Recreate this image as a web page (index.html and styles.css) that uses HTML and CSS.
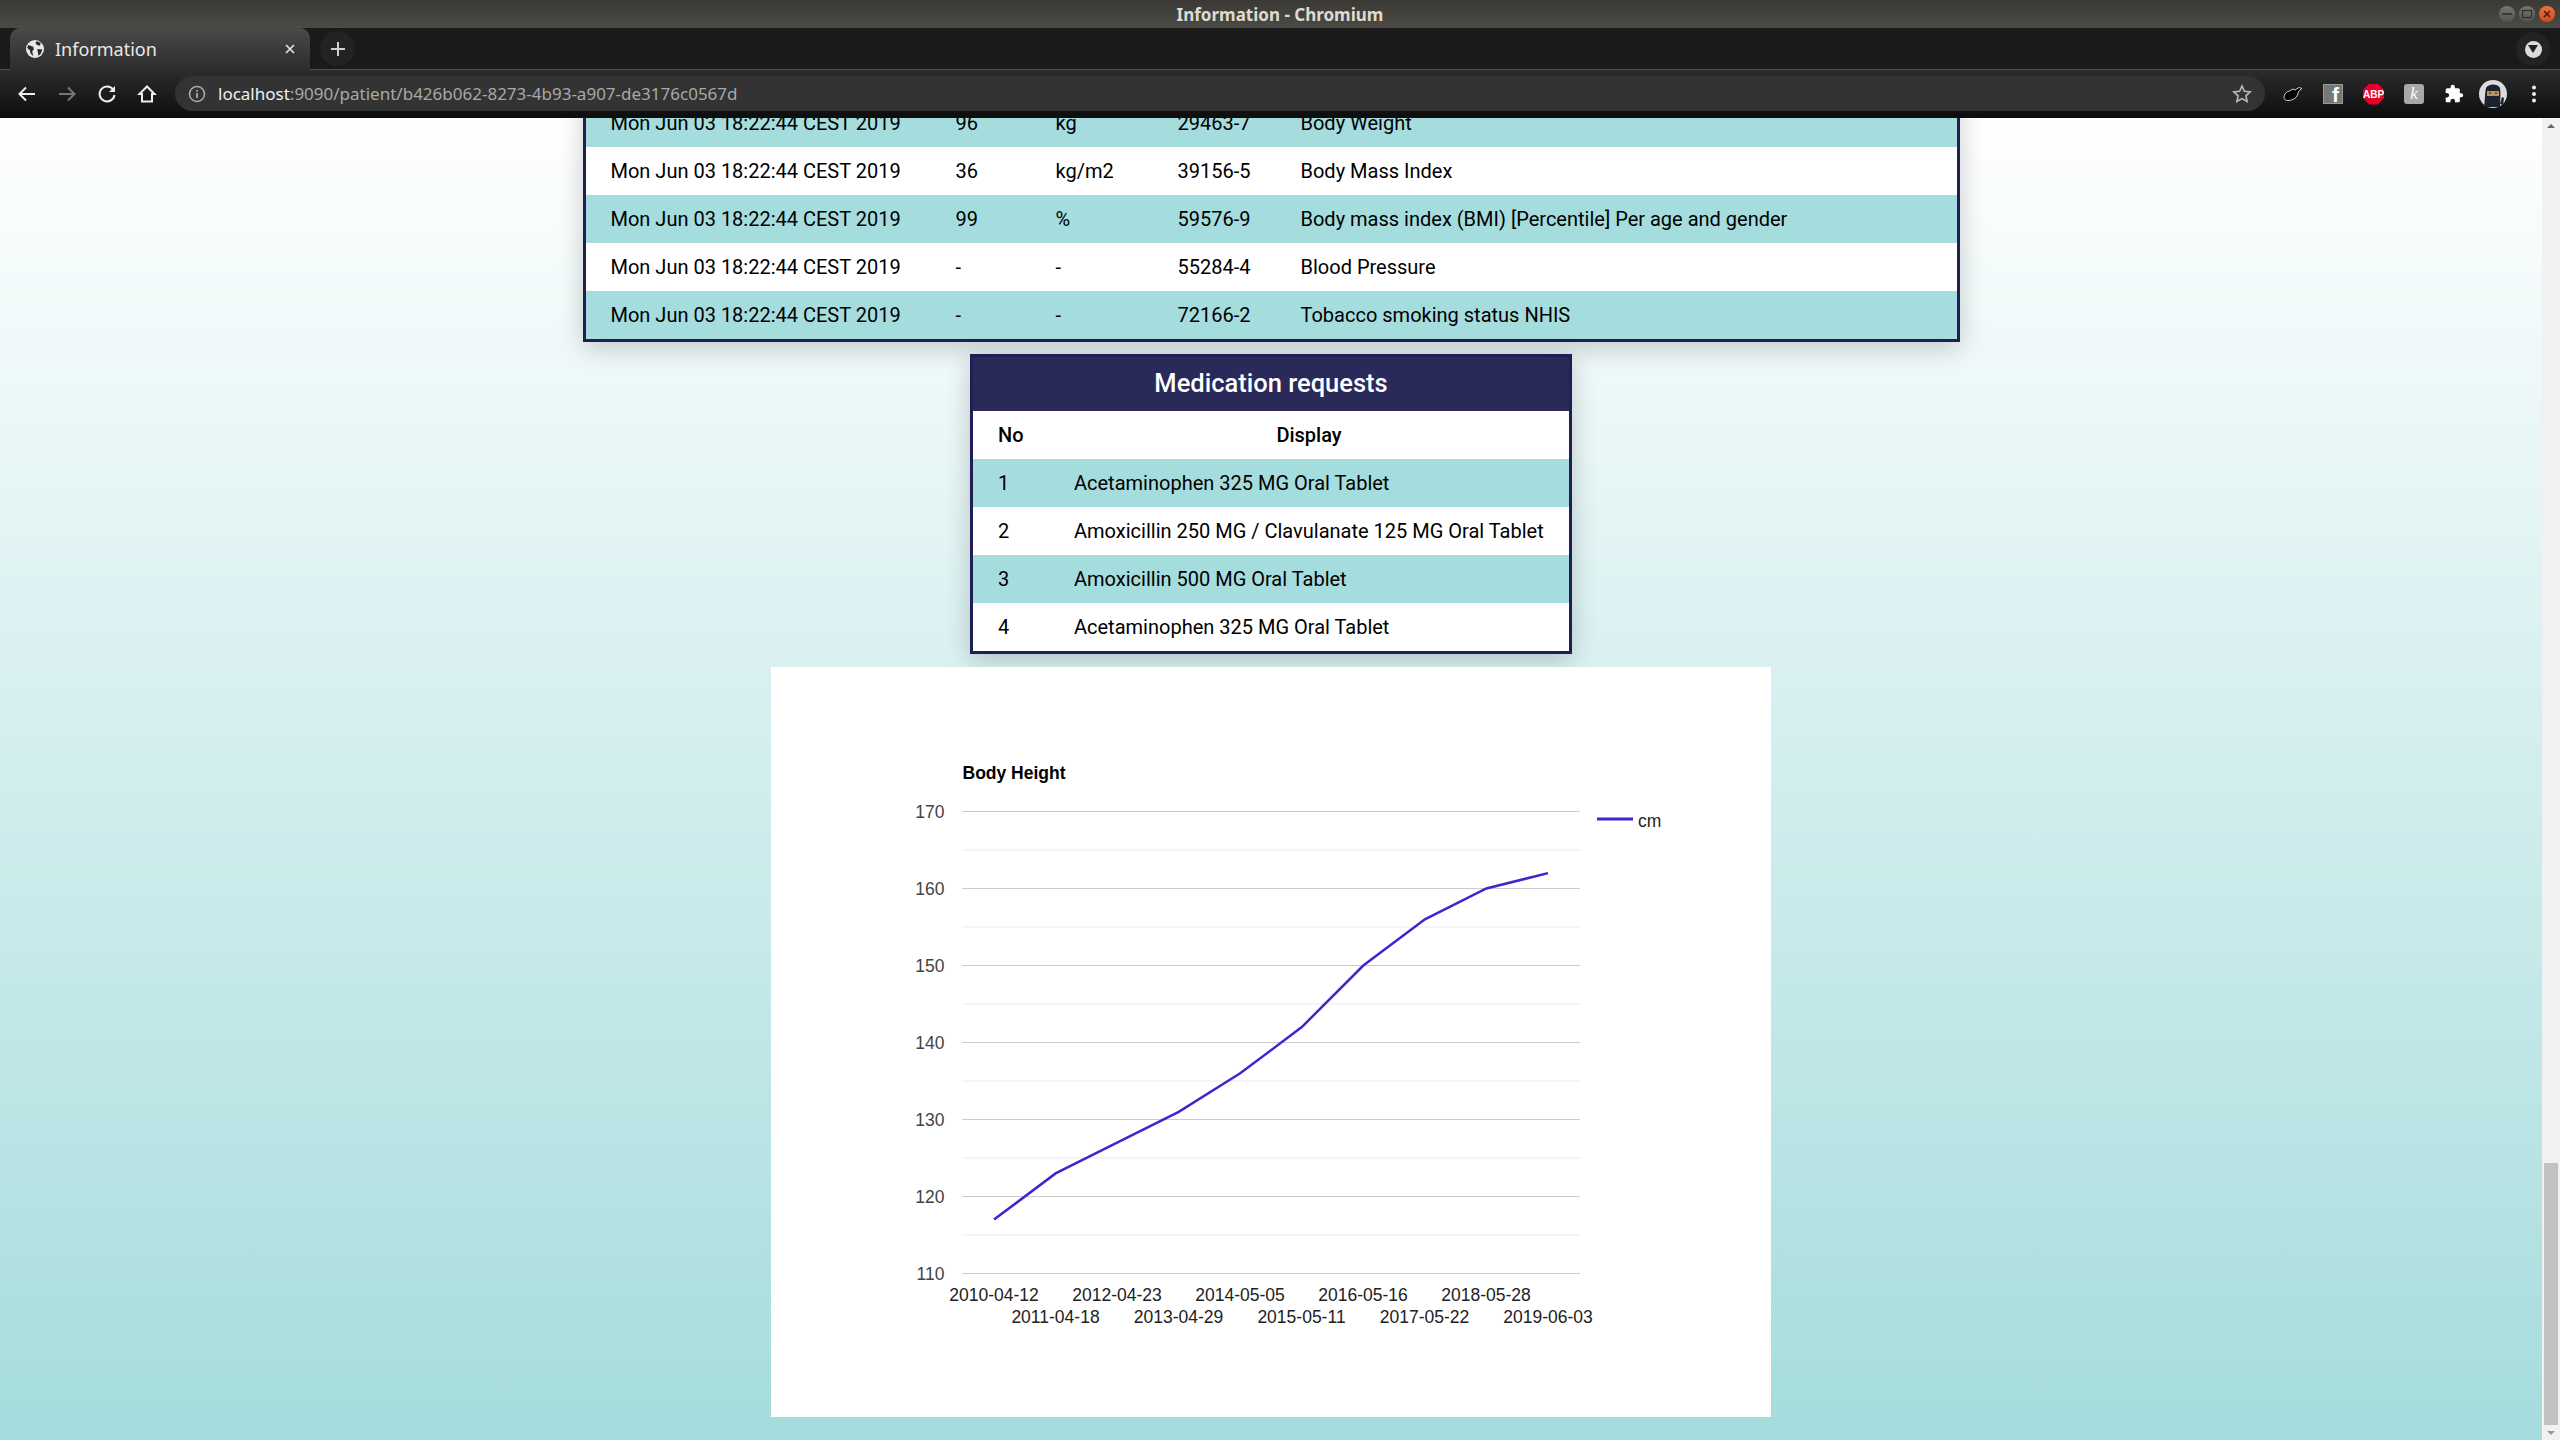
FILE: index.html
```html
<!DOCTYPE html>
<html>
<head>
<meta charset="utf-8"/>
<title>Information - Chromium</title>
<link rel="stylesheet" href="styles.css">
</head>
<body>

<!-- window title -->
<div class="titlebar">
  <span class="title-text">Information - Chromium</span>
  <div class="win-buttons">
    <span class="win-btn"><svg width="16" height="16"><path d="M3 8h10" stroke="#2e2d2a" stroke-width="1.5"/></svg></span>
    <span class="win-btn"><svg width="16" height="16"><rect x="3.5" y="4.5" width="9" height="7" fill="none" stroke="#2e2d2a" stroke-width="1.2"/></svg></span>
    <span class="win-btn win-close"><svg width="16" height="16"><path d="M5 5l6 6M11 5l-6 6" stroke="#3a2015" stroke-width="1.5"/></svg></span>
  </div>
</div>

<!-- tabs -->
<div class="tabstrip">
  <div class="tab">
    <svg class="favicon" width="18" height="18" viewBox="0 0 16 16">
      <circle cx="8" cy="8" r="8" fill="#e8e8e8"/>
      <path d="M2 4.5L6.5 6 7 8.5 5.5 10 6.5 14.5 4 12 3.5 9 1 7zM9 1l4 1.5-.5 2.5L10 4.5 8.5 3zM10 8l4.5 .5L13 12.5 11 14 10.5 10.5z" fill="#2a2a2a"/>
    </svg>
    <span class="tab-title">Information</span>
    <svg class="tab-close" width="12" height="12"><path d="M2 2l8 8M10 2l-8 8" stroke="#e8e8e8" stroke-width="1.6"/></svg>
  </div>
  <div class="new-tab"><svg width="16" height="16"><path d="M8 1v14M1 8h14" stroke="#d0d0d0" stroke-width="2"/></svg></div>
  <div class="strip-fill"></div>
  <div class="tab-search"><span class="tab-search-dot"><svg width="12" height="10"><path d="M1 1h10L6 9z" fill="#222"/></svg></span></div>
</div>

<!-- toolbar -->
<div class="toolbar">
  <svg class="nav-icon" width="20" height="20" viewBox="0 0 20 20"><path d="M18 10H3M9 3.500L2.500 10 9 16.500" fill="none" stroke="#eee" stroke-width="2"/></svg>
  <svg class="nav-icon" width="20" height="20" viewBox="0 0 20 20"><path d="M2 10h15M11 3.500l6.500 6.500-6.500 6.500" fill="none" stroke="#777" stroke-width="2"/></svg>
  <svg class="nav-icon" width="20" height="20" viewBox="0 0 20 20"><path d="M16.500 6A7.500 7.500 0 1 0 17.500 11" fill="none" stroke="#eee" stroke-width="2"/><path d="M18 2v6h-6z" fill="#eee"/></svg>
  <svg class="nav-icon" width="20" height="20" viewBox="0 0 20 20"><path d="M10 2.500L2.500 10H5v7.500h10V10h2.500z" fill="none" stroke="#eee" stroke-width="2"/></svg>
  <div class="omnibox">
    <svg width="18" height="18" viewBox="0 0 18 18"><circle cx="9" cy="9" r="7.500" fill="none" stroke="#aaa" stroke-width="1.600"/><path d="M9 8v5M9 5v1.800" stroke="#aaa" stroke-width="1.800"/></svg>
    <span class="url"><span class="url-host">localhost</span>:9090/patient/b426b062-8273-4b93-a907-de3176c0567d</span>
    <svg class="star" width="20" height="20" viewBox="0 0 20 20"><path d="M10 2l2.400 5.300 5.800 .6-4.300 3.900 1.200 5.700L10 14.600 4.900 17.500l1.200-5.700L1.800 7.900l5.800-.6z" fill="none" stroke="#bbb" stroke-width="1.600"/></svg>
  </div>
  <div class="ext-icons">
    <svg width="20" height="20" viewBox="0 0 20 20"><path d="M1 13.500C1 10 3.500 7.500 6.500 7L10 5 12 6 16 3.500 19 4.500 15.500 7.500 14.500 11C13 14.500 9.500 16.500 5 16.500 2.500 16.500 1 15.500 1 13.500z" fill="#000" stroke="#ccc" stroke-width="1"/></svg>
    <span class="ext-f">f</span>
    <span class="ext-abp">ABP</span>
    <span class="ext-k">k</span>
    <svg width="20" height="20" viewBox="0 0 24 24"><path d="M20.500 11H19V7c0-1.100-.9-2-2-2h-4V3.500C13 2.120 11.880 1 10.500 1S8 2.120 8 3.500V5H4c-1.100 0-1.990.9-1.990 2v3.800H3.500c1.490 0 2.700 1.210 2.700 2.700s-1.210 2.700-2.700 2.700H2V20c0 1.100.9 2 2 2h3.800v-1.500c0-1.490 1.210-2.700 2.700-2.700 1.490 0 2.700 1.210 2.700 2.700V22H17c1.100 0 2-.9 2-2v-4h1.500c1.380 0 2.500-1.120 2.500-2.500S21.880 11 20.500 11z" fill="#fff"/></svg>
    <svg class="avatar" width="28" height="28" viewBox="0 0 28 28">
      <circle cx="14" cy="14" r="14" fill="#dcdcdc"/>
      <path d="M5 27C6 20 6 12 7 8 9 4 18 3 21 8 22 13 21 20 21 27z" fill="#1d2230"/>
      <rect x="8" y="11" width="12" height="5" fill="#b9925f"/>
      <path d="M10 13h2M16 13h2" stroke="#222" stroke-width="1"/>
      <path d="M21 24l2-7 2 1-1 7z" fill="#1d2230"/>
    </svg>
    <svg width="6" height="20"><circle cx="3" cy="3.500" r="2" fill="#eee"/><circle cx="3" cy="10" r="2" fill="#eee"/><circle cx="3" cy="16.500" r="2" fill="#eee"/></svg>
  </div>
</div>

<div class="viewport">
  <div class="page">

    <table class="data-table obs-table">
      <colgroup><col class="c-date"><col class="c-value"><col class="c-unit"><col class="c-code"><col></colgroup>
      <tr><td>Mon Jun 03 18:22:44 CEST 2019</td><td>96</td><td>kg</td><td>29463-7</td><td>Body Weight</td></tr>
      <tr><td>Mon Jun 03 18:22:44 CEST 2019</td><td>36</td><td>kg/m2</td><td>39156-5</td><td>Body Mass Index</td></tr>
      <tr><td>Mon Jun 03 18:22:44 CEST 2019</td><td>99</td><td>%</td><td>59576-9</td><td>Body mass index (BMI) [Percentile] Per age and gender</td></tr>
      <tr><td>Mon Jun 03 18:22:44 CEST 2019</td><td>-</td><td>-</td><td>55284-4</td><td>Blood Pressure</td></tr>
      <tr><td>Mon Jun 03 18:22:44 CEST 2019</td><td>-</td><td>-</td><td>72166-2</td><td>Tobacco smoking status NHIS</td></tr>
    </table>

    <table class="data-table med-table">
      <colgroup><col class="c-no"><col></colgroup>
      <tr><th colspan="2" class="table-title">Medication requests</th></tr>
      <tr class="head-row"><th class="th-no">No</th><th>Display</th></tr>
      <tr><td>1</td><td>Acetaminophen 325 MG Oral Tablet</td></tr>
      <tr><td>2</td><td>Amoxicillin 250 MG / Clavulanate 125 MG Oral Tablet</td></tr>
      <tr><td>3</td><td>Amoxicillin 500 MG Oral Tablet</td></tr>
      <tr><td>4</td><td>Acetaminophen 325 MG Oral Tablet</td></tr>
    </table>

    <div class="chart-card">
      <svg class="chart" width="1000" height="750" viewBox="0 0 1000 750">
        <g class="grid-minor">
          <path d="M191 183H809M191 260H809M191 337H809M191 414H809M191 491H809M191 568H809"/>
        </g>
        <g class="grid-major">
          <path d="M191 144.500H809M191 221.500H809M191 298.500H809M191 375.500H809M191 452.500H809M191 529.500H809M191 606.500H809"/>
        </g>
        <text class="chart-title" x="191.500" y="112">Body Height</text>
        <g class="y-labels">
          <text x="173.500" y="151">170</text>
          <text x="173.500" y="228">160</text>
          <text x="173.500" y="305">150</text>
          <text x="173.500" y="382">140</text>
          <text x="173.500" y="459">130</text>
          <text x="173.500" y="536">120</text>
          <text x="173.500" y="613">110</text>
        </g>
        <polyline class="series" points="223,552.6 284.600,506.400 346.100,475.600 407.700,444.800 469.200,406.300 530.800,360.100 592.300,298.500 653.900,252.300 715.400,221.500 777,206.100"/>
        <g class="x-labels">
          <text x="223" y="634">2010-04-12</text>
          <text x="346" y="634">2012-04-23</text>
          <text x="469" y="634">2014-05-05</text>
          <text x="592" y="634">2016-05-16</text>
          <text x="715" y="634">2018-05-28</text>
          <text x="284.500" y="656">2011-04-18</text>
          <text x="407.500" y="656">2013-04-29</text>
          <text x="530.500" y="656">2015-05-11</text>
          <text x="653.500" y="656">2017-05-22</text>
          <text x="777" y="656">2019-06-03</text>
        </g>
        <path class="legend-key" d="M826 152H862"/>
        <text class="legend" x="867" y="160">cm</text>
      </svg>
    </div>

  </div>

  <div class="scrollbar">
    <span class="arrow-up"></span>
    <div class="thumb"></div>
    <span class="arrow-down"></span>
  </div>
</div>

</body>
</html>
```

FILE: styles.css
```css
html, body {
  margin: 0;
  height: 100%;
}

body {
  display: flex;
  flex-direction: column;
  overflow: hidden;
  font-family: Roboto, sans-serif;
  background-color: white;
}

/* browser chrome */
.titlebar {
  height: 28px;
  flex: none;
  display: flex;
  align-items: center;
  justify-content: center;
  background: linear-gradient(#3a3935, #4b4a44);
  position: relative;
}

.title-text {
  font-family: "Noto Sans", sans-serif;
  font-weight: 700;
  font-size: 17px;
  color: #dfdbd2;
}

.win-buttons {
  position: absolute;
  right: 5px;
  top: 6px;
  display: flex;
  gap: 4px;
}

.win-btn {
  width: 16px;
  height: 16px;
  border-radius: 50%;
  background: linear-gradient(#77756f, #55534d);
  display: flex;
}

.win-close {
  background: linear-gradient(#f0723e, #d3481a);
}

.tabstrip {
  height: 42px;
  flex: none;
  box-sizing: border-box;
  display: flex;
  align-items: flex-end;
  background: #1a1a1a;
  border-bottom: 1px solid #505050;
}

.tab {
  height: 42px;
  width: 300px;
  margin: 0 0 -1px 10px;
  box-sizing: border-box;
  padding: 0 14px 0 16px;
  display: flex;
  align-items: center;
  background: linear-gradient(#4a4a4a, #2c2c2c);
  border-radius: 10px 10px 0 0;
}

.tab-title {
  flex: 1;
  margin-left: 11px;
  font-family: "Noto Sans", sans-serif;
  font-size: 18px;
  color: #e8e8e8;
}

.new-tab {
  width: 35px;
  height: 35px;
  margin: 0 0 3px 10px;
  border-radius: 50%;
  background: #232323;
  display: flex;
  align-items: center;
  justify-content: center;
}

.strip-fill {
  flex: 1;
}

.tab-search {
  width: 34px;
  height: 34px;
  margin: 0 10px 3px 0;
  border-radius: 50%;
  background: #232323;
  display: flex;
  align-items: center;
  justify-content: center;
}

.tab-search-dot {
  width: 17px;
  height: 17px;
  border-radius: 50%;
  background: #dcdcdc;
  display: flex;
  align-items: center;
  justify-content: center;
}

.toolbar {
  height: 48px;
  flex: none;
  display: flex;
  align-items: center;
  padding-left: 17px;
  gap: 20px;
  background: linear-gradient(#2c2c2c, #0d0d0d);
}

.nav-icon {
  flex: none;
}

.omnibox {
  width: 2090px;
  height: 35px;
  margin: -1px 0 0 -2px;
  box-sizing: border-box;
  padding: 0 13px;
  display: flex;
  align-items: center;
  border-radius: 18px;
  background: #333333;
}

.url {
  flex: 1;
  margin-left: 12px;
  font-family: "Noto Sans", sans-serif;
  font-size: 17px;
  color: #a8a8a8;
}

.url-host {
  color: #f0f0f0;
}

.ext-icons {
  display: flex;
  align-items: center;
  margin-left: -2px;
  gap: 20px;
}

.avatar {
  margin: 0 4px 0 -5px;
}

.ext-f {
  width: 20px;
  height: 20px;
  background: #777;
  border: 1px solid #999;
  box-sizing: border-box;
  color: white;
  font: 700 21px/19px "Liberation Sans", sans-serif;
  text-align: right;
  padding-right: 3px;
}

.ext-abp {
  width: 21px;
  height: 21px;
  background: #e8002b;
  clip-path: polygon(30% 0, 70% 0, 100% 30%, 100% 70%, 70% 100%, 30% 100%, 0 70%, 0 30%);
  color: white;
  font: 700 10px/21px "Liberation Sans", sans-serif;
  text-align: center;
}

.ext-k {
  width: 20px;
  height: 20px;
  border-radius: 3px;
  background: #a8a8a8;
  color: white;
  font: italic 17px/20px "Liberation Serif", serif;
  text-align: center;
}

/* page */
.viewport {
  flex: 1;
  min-height: 0;
  display: flex;
}

.page {
  flex: 1;
  min-width: 0;
  overflow: hidden;
  display: flex;
  flex-direction: column;
  align-items: center;
  background: linear-gradient(white, #a5dcdd);
}

.data-table {
  flex: none;
  table-layout: fixed;
  border-collapse: separate;
  border-spacing: 0;
  box-sizing: border-box;
  border: 3px solid #1f1f55;
  background: white;
  box-shadow: 0 6px 24px rgba(0, 0, 0, 0.2);
  font-size: 20px;
  color: black;
}

.data-table td, .data-table th {
  height: 48px;
  box-sizing: border-box;
  padding: 0 0 0 25px;
  font-weight: 400;
  text-align: left;
  white-space: nowrap;
}

.data-table tr:nth-child(odd) td {
  background: #a5dcdd;
}

.obs-table {
  width: 1377px;
  margin-top: -22px;
}

.c-date { width: 345px; }
.c-value { width: 100px; }
.c-unit { width: 122px; }
.c-code { width: 123px; }

.med-table {
  width: 602px;
  margin-top: 12px;
}

.c-no { width: 76px; }

.data-table .table-title {
  height: 54px;
  padding: 0 0 2px;
  background: #29295a;
  color: white;
  font-size: 25.5px;
  font-weight: 500;
  text-align: center;
}

.data-table .head-row th {
  font-weight: 500;
  text-align: center;
  padding: 0;
}

.data-table .head-row .th-no {
  text-align: left;
  padding: 0 0 0 25px;
}

.chart-card {
  flex: none;
  width: 1000px;
  height: 750px;
  margin-top: 13px;
  background: white;
}

.chart {
  display: block;
  font-family: "Liberation Sans", sans-serif;
  font-size: 17.5px;
}

.grid-minor path {
  stroke: #ebebeb;
  stroke-width: 1.2;
}

.grid-major path {
  stroke: #cccccc;
  stroke-width: 1.2;
}

.chart-title {
  font-weight: 700;
  fill: black;
}

.y-labels text {
  text-anchor: end;
  fill: #444444;
}

.x-labels text {
  text-anchor: middle;
  fill: #222222;
}

.legend {
  fill: #222222;
}

.series {
  fill: none;
  stroke: #4422cc;
  stroke-width: 2.5;
}

.legend-key {
  stroke: #4422cc;
  stroke-width: 3;
}

/* scrollbar */
.scrollbar {
  width: 18px;
  flex: none;
  box-sizing: border-box;
  padding: 0 2px;
  display: flex;
  flex-direction: column;
  align-items: center;
  background: #f1f1f1;
}

.arrow-up {
  margin-top: 6px;
  border: 4px solid transparent;
  border-top: 0;
  border-bottom: 4px solid #666;
  border-left-width: 4px;
}

.thumb {
  width: 14px;
  height: 262px;
  margin-top: auto;
  background: #c1c1c1;
}

.arrow-down {
  margin: 6px 0 5px;
  border: 4px solid transparent;
  border-bottom: 0;
  border-top: 4px solid #999;
}
```
